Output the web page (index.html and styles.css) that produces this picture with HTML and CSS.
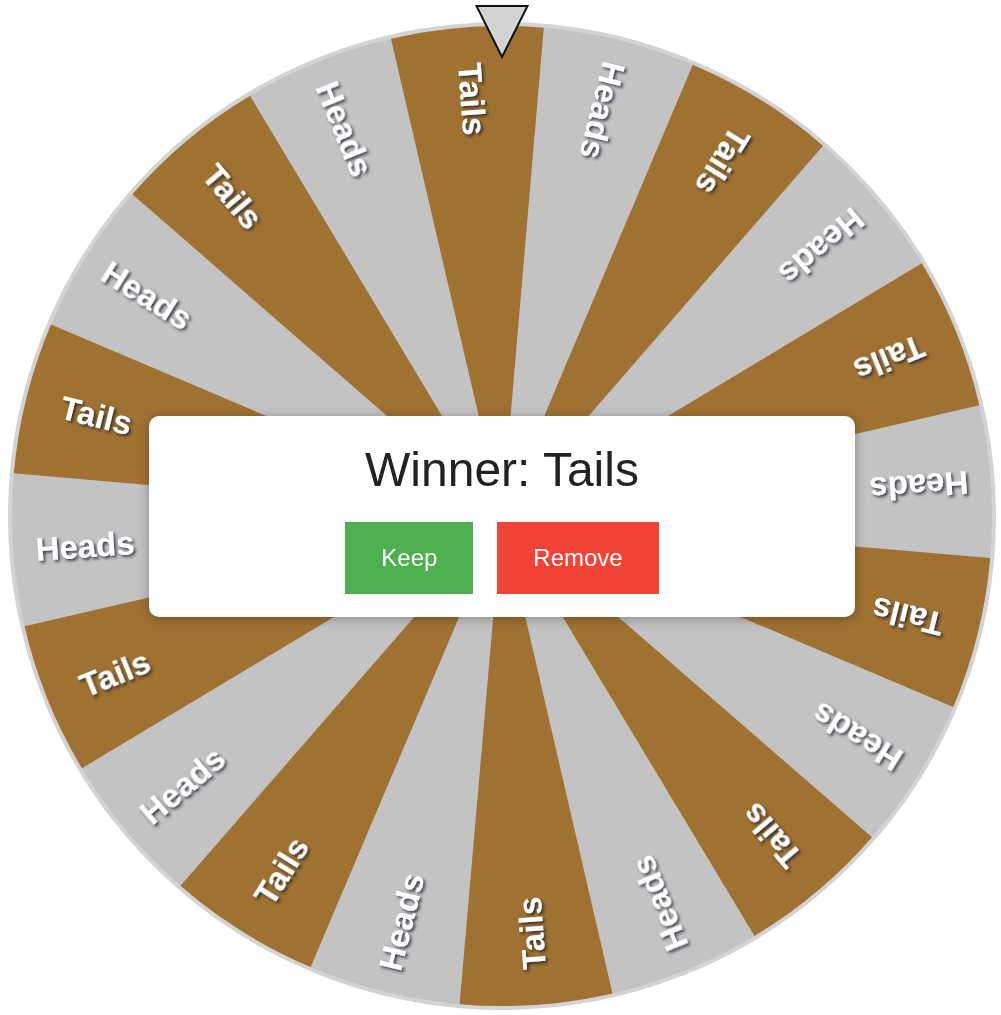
FILE: index.html
```html
<!DOCTYPE html>
<html lang="en">
<head>
<meta charset="utf-8">
<title>Wheel</title>
<link rel="stylesheet" href="styles.css">
</head>
<body>
<div class="wheel-area">
  <svg class="wheel" viewBox="-494 -494 988 988" width="988" height="988">
    <defs>
      <filter id="sh" x="-10%" y="-10%" width="120%" height="120%">
        <feDropShadow dx="2" dy="2" stdDeviation="1.6" flood-color="#1a2230" flood-opacity="0.8"/>
      </filter>
    </defs>
    <circle r="492" class="rim"/>
    <circle r="245" class="wedges" transform="rotate(256.9)"/>
    <g class="labels" filter="url(#sh)">
      <text transform="rotate(265.9) translate(418) rotate(180)">Tails</text>
      <text transform="rotate(283.9) translate(418) rotate(180)">Heads</text>
      <text transform="rotate(301.9) translate(418) rotate(180)">Tails</text>
      <text transform="rotate(319.9) translate(418) rotate(180)">Heads</text>
      <text transform="rotate(337.9) translate(418) rotate(180)">Tails</text>
      <text transform="rotate(355.9) translate(418) rotate(180)">Heads</text>
      <text transform="rotate(373.9) translate(418) rotate(180)">Tails</text>
      <text transform="rotate(391.9) translate(418) rotate(180)">Heads</text>
      <text transform="rotate(409.9) translate(418) rotate(180)">Tails</text>
      <text transform="rotate(427.9) translate(418) rotate(180)">Heads</text>
      <text transform="rotate(445.9) translate(418) rotate(180)">Tails</text>
      <text transform="rotate(463.9) translate(418) rotate(180)">Heads</text>
      <text transform="rotate(481.9) translate(418) rotate(180)">Tails</text>
      <text transform="rotate(499.9) translate(418) rotate(180)">Heads</text>
      <text transform="rotate(517.9) translate(418) rotate(180)">Tails</text>
      <text transform="rotate(535.9) translate(418) rotate(180)">Heads</text>
      <text transform="rotate(553.9) translate(418) rotate(180)">Tails</text>
      <text transform="rotate(571.9) translate(418) rotate(180)">Heads</text>
      <text transform="rotate(589.9) translate(418) rotate(180)">Tails</text>
      <text transform="rotate(607.9) translate(418) rotate(180)">Heads</text>
    </g>
  </svg>
  <svg class="pointer" viewBox="0 0 55 55" width="55" height="55">
    <polygon points="2,2 53,2 27.5,53"/>
  </svg>
  <div class="modal">
    <h2 class="winner">Winner: Tails</h2>
    <div class="actions">
      <button class="btn keep">Keep</button>
      <button class="btn remove">Remove</button>
    </div>
  </div>
</div>
</body>
</html>
```

FILE: styles.css
```css
html, body {
  margin: 0;
  padding: 0;
  background: #ffffff;
}

body {
  font-family: "Liberation Sans", Arial, sans-serif;
}

.wheel-area {
  position: relative;
  display: grid;
  width: 988px;
  height: 988px;
  margin: 22px 0 0 8px;
}

.wheel {
  grid-area: 1 / 1;
  display: block;
  width: 988px;
  height: 988px;
}

.rim {
  fill: #c3c3c3;
  stroke: #d3d3d3;
  stroke-width: 4;
}

.wedges {
  fill: none;
  stroke: #a07232;
  stroke-width: 490;
  stroke-dasharray: 76.969 76.969;
}

.labels text {
  fill: #ffffff;
  font-family: "Liberation Sans", Arial, sans-serif;
  font-weight: bold;
  font-size: 33px;
  text-anchor: middle;
  dominant-baseline: central;
}

.pointer {
  position: absolute;
  top: -18px;
  left: 50%;
  transform: translateX(-50%);
  width: 55px;
  height: 55px;
}

.pointer polygon {
  fill: #d3d3d3;
  stroke: #111111;
  stroke-width: 2;
  stroke-linejoin: miter;
}

.modal {
  grid-area: 1 / 1;
  place-self: center;
  width: 706px;
  box-sizing: border-box;
  padding: 27px 20px 23px;
  background: #ffffff;
  border-radius: 10px;
  box-shadow: 0 2px 12px rgba(0, 0, 0, 0.3);
  text-align: center;
}

.winner {
  margin: 0 0 25px;
  font-size: 48px;
  font-weight: 400;
  line-height: 54px;
  color: #222222;
}

.actions {
  display: flex;
  justify-content: center;
  gap: 24px;
}

.btn {
  height: 72px;
  padding: 0 36px;
  border: 0;
  border-radius: 0;
  font-family: "Liberation Sans", Arial, sans-serif;
  font-size: 24px;
  color: #ffffff;
  cursor: pointer;
}

.keep {
  background: #4caf50;
}

.remove {
  background: #f44336;
}
```
